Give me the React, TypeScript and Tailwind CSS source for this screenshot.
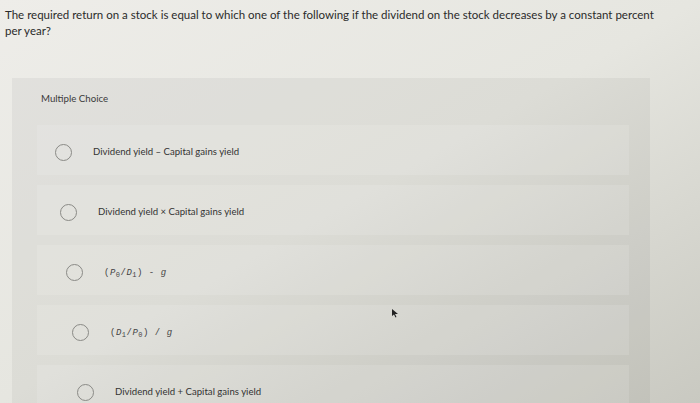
import type { ReactNode } from 'react'

interface Option {
  indent: string
  label: ReactNode
}

const sans = "font-['Lato','Open_Sans',sans-serif]"

function Mono({ children }: { children: ReactNode }) {
  return (
    <span className="font-['Liberation_Mono','DejaVu_Sans_Mono',monospace] text-[9px] text-[#444] tracking-[0.5px]">
      {children}
    </span>
  )
}

// the rows drift right a little as they go down (camera angle)
const options: Option[] = [
  { indent: 'ml-[18px]', label: <span>Dividend yield – Capital gains yield</span> },
  { indent: 'ml-[23px]', label: <span>Dividend yield × Capital gains yield</span> },
  {
    indent: 'ml-[29px]',
    label: (
      <Mono>
        (<i>P</i><sub className="text-[7px]">0</sub>/<i>D</i><sub className="text-[7px]">1</sub>) - <i>g</i>
      </Mono>
    ),
  },
  {
    indent: 'ml-[35px]',
    label: (
      <Mono>
        (<i>D</i><sub className="text-[7px]">1</sub>/<i>P</i><sub className="text-[7px]">0</sub>) / <i>g</i>
      </Mono>
    ),
  },
  { indent: 'ml-[40px]', label: <span>Dividend yield + Capital gains yield</span> },
]

export default function App() {
  return (
    <div className="relative w-[700px] h-[403px] overflow-hidden bg-linear-to-br from-[#eeede9] via-[#e6e6e0] to-[#c9c9c1]">
      <p className={`${sans} pl-[5px] pt-[7px] pr-[30px] text-[11.5px] leading-[16px] text-[#2a2a2a]`}>
        The required return on a stock is equal to which one of the following if the dividend on the stock decreases by a constant percent per year?
      </p>

      <div className="ml-[12px] mt-[39px] w-[638px] h-[330px] bg-black/[0.045]">
        <div className={`${sans} pl-[29px] pt-[13px] h-[47px] text-[9.7px] text-[#3a3a3a]`}>Multiple Choice</div>

        <div className="flex flex-col gap-[10px]">
          {options.map((o, i) => (
            <div key={i} className="ml-[25px] w-[592px] h-[50px] flex items-center pt-[5px] bg-white/[0.12]">
              <div className={`${o.indent} w-[17px] h-[17px] shrink-0 rounded-full border-[1.5px] border-[#8a8a86]`} />
              <div className={`${sans} ml-[21px] text-[9.6px] text-[#333]`}>{o.label}</div>
            </div>
          ))}
        </div>
      </div>

      <svg className="absolute left-[391px] top-[308px]" width="8" height="10" viewBox="0 0 8 10">
        <path d="M1 1 L1 8 L3 6.5 L4.5 9.5 L5.5 9 L4 6 L7 6 Z" fill="#222" />
      </svg>
    </div>
  )
}
